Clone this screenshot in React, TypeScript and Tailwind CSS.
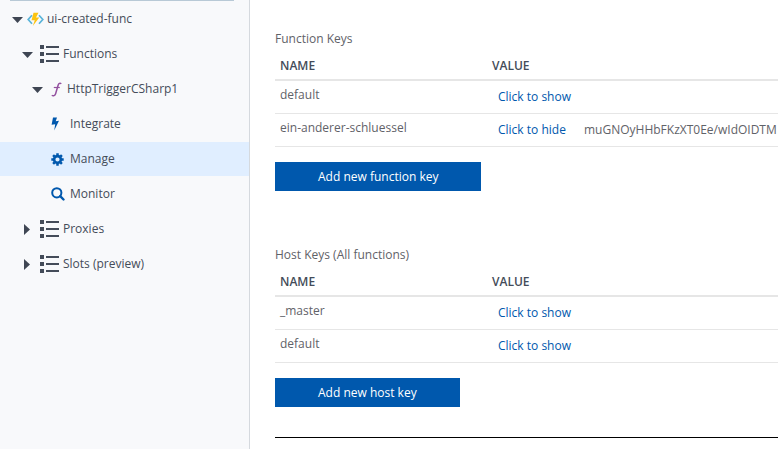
import type { ReactNode } from "react";

function BoltIcon() {
  return (
    <svg viewBox="0 0 9 14" className="ml-px h-[14px] w-[9px] shrink-0" fill="#0058ad" aria-hidden="true">
      <path d="M2 .5h4L4.700 4.300 8 3.800 3.200 13.500 4.200 7.200.6 7.700z" />
    </svg>
  );
}

function GearIcon() {
  return (
    <svg viewBox="0 0 13 13" className="ml-px h-[13px] w-[13px] shrink-0" fill="none" stroke="#0058ad" aria-hidden="true">
      <circle cx="6.500" cy="6.500" r="3.400" strokeWidth="2.600" />
      <path
        d="M6.500.3v2M6.500 10.700v2M.3 6.500h2M10.700 6.500h2M2.100 2.100l1.500 1.500M9.400 9.400l1.500 1.500M2.100 10.900l1.500-1.500M9.400 3.600l1.500-1.500"
        strokeWidth="2.500"
      />
    </svg>
  );
}

function SearchIcon() {
  return (
    <svg viewBox="0 0 14 14" className="ml-px h-[14px] w-[14px] shrink-0" fill="none" stroke="#0058ad" aria-hidden="true">
      <circle cx="5.800" cy="5.800" r="4.600" strokeWidth="2" />
      <path d="M9.200 9.200l3.300 3.300" strokeWidth="2.400" strokeLinecap="round" />
    </svg>
  );
}

function AppIcon() {
  return (
    <svg viewBox="0 0 17 15" className="h-[15px] w-[17px] shrink-0" aria-hidden="true">
      <path d="M5 3.300 1.200 7.500 5 11.700M12 3.300l3.800 4.200-3.800 4.200" fill="none" stroke="#59b4d9" strokeWidth="1.700" />
      <path d="M6.500.7h5L9 5.500h3.300L5.800 14l2-5.800H4.500z" fill="#fcc40f" />
    </svg>
  );
}

function FunctionIcon() {
  return (
    <svg viewBox="0 0 11 15" className="h-[15px] w-[11px] shrink-0" fill="none" stroke="#93519f" aria-hidden="true">
      <path d="M10.300 1.800C9 .7 7.700 1.300 7.100 3.300L4.600 11.700C4 13.700 2.200 14.400.8 13.200" strokeWidth="1.500" />
      <path d="M2.800 5.500h6" strokeWidth="1.200" />
    </svg>
  );
}

function ListIcon() {
  return (
    <svg viewBox="0 0 19 18" className="h-[18px] w-[19px] shrink-0" fill="#444c59" aria-hidden="true">
      <path d="M0 0h4v4H0zM0 7h4v4H0zM0 14h4v4H0zM6 1h13v2H6zM6 8h13v2H6zM6 15h13v2H6z" />
    </svg>
  );
}

function Caret({ open }: { open: boolean }) {
  return (
    <svg viewBox="0 0 11 11" className="h-[11px] w-[11px] shrink-0" fill="#3f4653" aria-hidden="true">
      <path d={open ? "M0 3h11L5.500 9z" : "M2 0v11l6-5.500z"} />
    </svg>
  );
}

type TreeItem = { label: string; indent: string; open?: boolean; icon: ReactNode; selected?: boolean };

const items: TreeItem[] = [
  { label: "ui-created-func", indent: "pl-3 gap-[3px]", open: true, icon: <span className="flex pl-px"><AppIcon /></span> },
  { label: "Functions", indent: "pl-[22px] gap-1", open: true, icon: <span className="flex pl-[3px]"><ListIcon /></span> },
  { label: "HttpTriggerCSharp1", indent: "pl-8 gap-1", open: true, icon: <span className="flex pl-1 pr-px"><FunctionIcon /></span> },
  { label: "Integrate", indent: "pl-[50px]", icon: <span className="flex w-5"><BoltIcon /></span> },
  { label: "Manage", indent: "pl-[50px]", selected: true, icon: <span className="flex w-5"><GearIcon /></span> },
  { label: "Monitor", indent: "pl-[50px]", icon: <span className="flex w-5"><SearchIcon /></span> },
  { label: "Proxies", indent: "pl-[22px] gap-1", open: false, icon: <span className="flex pl-[3px]"><ListIcon /></span> },
  { label: "Slots (preview)", indent: "pl-[22px] gap-1", open: false, icon: <span className="flex pl-[3px]"><ListIcon /></span> },
];

type Key = { name: string; value?: string };

function KeySection({ title, keys, action }: { title: string; keys: Key[]; action: string }) {
  return (
    <section className="mb-[55px]">
      <h2 className="leading-[18px] text-[#5f6268]">{title}</h2>
      <table className="mt-1 mb-[15px] w-full table-fixed border-separate border-spacing-0 text-left">
        <thead>
          <tr className="text-[#444c59]">
            <th className="h-[29px] w-[212px] border-b-2 border-[#e6e6e6] px-[5px] font-semibold">NAME</th>
            <th className="border-b-2 border-[#e6e6e6] px-[5px] font-semibold">VALUE</th>
          </tr>
        </thead>
        <tbody>
          {keys.map((key) => (
            <tr key={key.name}>
              <td className="h-[33px] border-b border-[#e6e6e6] px-[5px] pb-1 text-[#5f6268]">{key.name}</td>
              <td className="border-b border-[#e6e6e6] pl-[11px] whitespace-nowrap">
                <div className="flex">
                  <button type="button" className="w-[86px] shrink-0 text-left text-[#0058ad]">
                    {key.value ? "Click to hide" : "Click to show"}
                  </button>
                  {key.value && <span className="text-[#5f6268]">{key.value}</span>}
                </div>
              </td>
            </tr>
          ))}
        </tbody>
      </table>
      <button type="button" className="h-[29px] bg-[#0058ad] px-[43px] font-medium text-white">{action}</button>
    </section>
  );
}

export default function App() {
  return (
    <div className="flex min-h-screen bg-white font-['Open_Sans','Noto_Sans',sans-serif] text-[12px] leading-4">
      <nav className="w-[250px] shrink-0 border-r border-[#d5d9de] bg-[#f8f9fb] text-[#444c59]">
        <div className="mr-[15px] mb-px ml-[10px] h-px bg-[#b8c9d6]" />
        <ul className="flex flex-col gap-px">
          {items.map((item) => (
            <li key={item.label}>
              <button
                type="button"
                className={`flex h-[34px] w-full items-center ${item.indent} ${item.selected ? "bg-[#e0eeff]" : ""}`}
              >
                {item.open !== undefined && <Caret open={item.open} />}
                {item.icon}
                <span>{item.label}</span>
              </button>
            </li>
          ))}
        </ul>
      </nav>
      <main className="min-w-0 flex-1 pt-[30px] pl-[25px]">
        <KeySection
          title="Function Keys"
          keys={[{ name: "default" }, { name: "ein-anderer-schluessel", value: "muGNOyHHbFKzXT0Ee/wIdOIDTM" }]}
          action="Add new function key"
        />
        <KeySection
          title="Host Keys (All functions)"
          keys={[{ name: "_master" }, { name: "default" }]}
          action="Add new host key"
        />
        <hr className="-mt-[25px] border-black" />
      </main>
    </div>
  );
}
